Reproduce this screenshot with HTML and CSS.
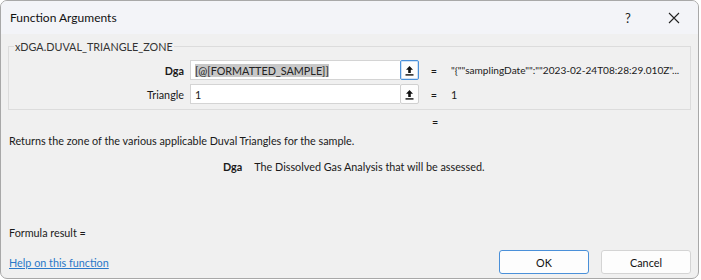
FILE: index.html
```html
<!doctype html>
<html lang="en">
<head>
  <meta charset="utf-8" />
  <title>Function Arguments</title>
  <link rel="stylesheet" href="styles.css">
</head>
<body>
  <div class="dialog" role="dialog" aria-label="Function Arguments">
    <div class="titlebar">
      <span class="title">Function Arguments</span>
      <span class="tb-btn help">?</span>
      <span class="tb-btn close">
        <svg width="12" height="12" viewBox="0 0 12 12"><path d="M1 1L11 11M11 1L1 11" stroke="#222" stroke-width="1.1" fill="none"/></svg>
      </span>
    </div>

    <div class="content">
      <fieldset class="group">
        <legend>xDGA.DUVAL_TRIANGLE_ZONE</legend>
        <div class="args">
          <label class="arg-name bold" for="dga">Dga</label>
          <div class="input"><span class="sel">[@[FORMATTED_SAMPLE]]</span></div>
          <button class="ref focus" type="button" aria-label="Collapse">
            <svg width="9" height="11" viewBox="0 0 9 11"><path d="M4.5 1L1 4.8h2.2V8h2.6V4.8H8z" fill="#111"/><rect x="0.5" y="9.2" width="8" height="1.4" fill="#111"/></svg>
          </button>
          <span class="eq">=</span>
          <span class="val long">"{""samplingDate"":""2023-02-24T08:28:29.010Z"...</span>

          <label class="arg-name" for="tri">Triangle</label>
          <div class="input">1</div>
          <button class="ref" type="button" aria-label="Collapse">
            <svg width="9" height="11" viewBox="0 0 9 11"><path d="M4.5 1L1 4.8h2.2V8h2.6V4.8H8z" fill="#111"/><rect x="0.5" y="9.2" width="8" height="1.4" fill="#111"/></svg>
          </button>
          <span class="eq">=</span>
          <span class="val">1</span>
        </div>
      </fieldset>

      <div class="result-eq">=</div>

      <p class="desc">Returns the zone of the various applicable Duval Triangles for the sample.</p>

      <div class="arg-help">
        <span class="bold">Dga</span>
        <span>The Dissolved Gas Analysis that will be assessed.</span>
      </div>

      <div class="spacer"></div>

      <div class="formula">Formula result =</div>

      <div class="footer">
        <a href="#" class="link">Help on this function</a>
        <div class="buttons">
          <button class="btn default" type="button">OK</button>
          <button class="btn" type="button">Cancel</button>
        </div>
      </div>
    </div>
  </div>
</body>
</html>
```

FILE: styles.css
```css
:root{
  --body:#f0f0f0;
  --title:#f3f4f8;
  --border:#d9d9d9;
  --text:#1a1a1a;
  --accent:#4a90d9;
}
html,body{margin:0;background:#fff;}
body{font-family:Lato,"Noto Sans",Arial,sans-serif;font-size:10.8px;color:var(--text);}

.dialog{
  width:697px;height:277px;background:var(--body);
  border:1px solid #a8a8a8;border-radius:7px;overflow:hidden;
  display:flex;flex-direction:column;
}
.titlebar{
  height:33px;background:var(--title);display:flex;align-items:center;
  padding-left:9px;flex:none;
}
.title{flex:1;font-size:12px;color:#111;}
.tb-btn{width:46px;display:flex;align-items:center;justify-content:center;font-size:13px;color:#222;}
.tb-btn.close{margin-right:1px}

.content{flex:1;display:flex;flex-direction:column;padding:0 7px 4px 7px;}

.group{
  margin:6px 0 0 0;padding:7px 0 5px 0;border:1px solid #dcdcdc;
}
.group legend{padding:0 1px;margin-left:5px;color:#333;}
.args{
  display:grid;
  grid-template-columns:181px 210px 19px 30px 1fr;
  grid-auto-rows:20px;row-gap:4px;align-items:center;
}
.arg-name{text-align:right;padding-right:6px;}
.bold{font-weight:700;}
.input{
  height:20px;box-sizing:border-box;background:#fff;border:1px solid #d4d4d4;border-right:0;
  padding:0 4px;display:flex;align-items:center;
}
.sel{background:#c8c8c8;color:#222;}
.ref{
  height:20px;width:19px;box-sizing:border-box;padding:0;margin:0;
  background:#fdfdfd;border:1px solid #d0d0d0;border-radius:2px;
  display:flex;align-items:center;justify-content:center;
}
.ref.focus{border:1px solid var(--accent);box-shadow:inset 0 0 0 1px #cfe2f7;}
.eq{text-align:center;}
.val{padding-left:2px;white-space:nowrap;overflow:hidden;}
.val.long{font-size:10.1px;}

.result-eq{margin:5px 0 0 424px;height:14px;}
.desc{margin:5px 0 0 1px;}
.arg-help{margin:13px 0 0 215px;display:flex;gap:12px;}

.spacer{flex:1;}
.formula{margin:0 0 0 1px;}
.footer{display:flex;align-items:center;justify-content:space-between;margin-top:11px;}
.link{color:#2a78c8;text-decoration:underline;margin-left:1px;}
.buttons{display:flex;gap:12px;margin-right:0;}
.btn{
  width:90px;height:24px;box-sizing:border-box;font:inherit;color:#111;
  background:#fdfdfd;border:1px solid #d4d4d4;border-radius:3px;
}
.btn.default{border-color:var(--accent);}
```
